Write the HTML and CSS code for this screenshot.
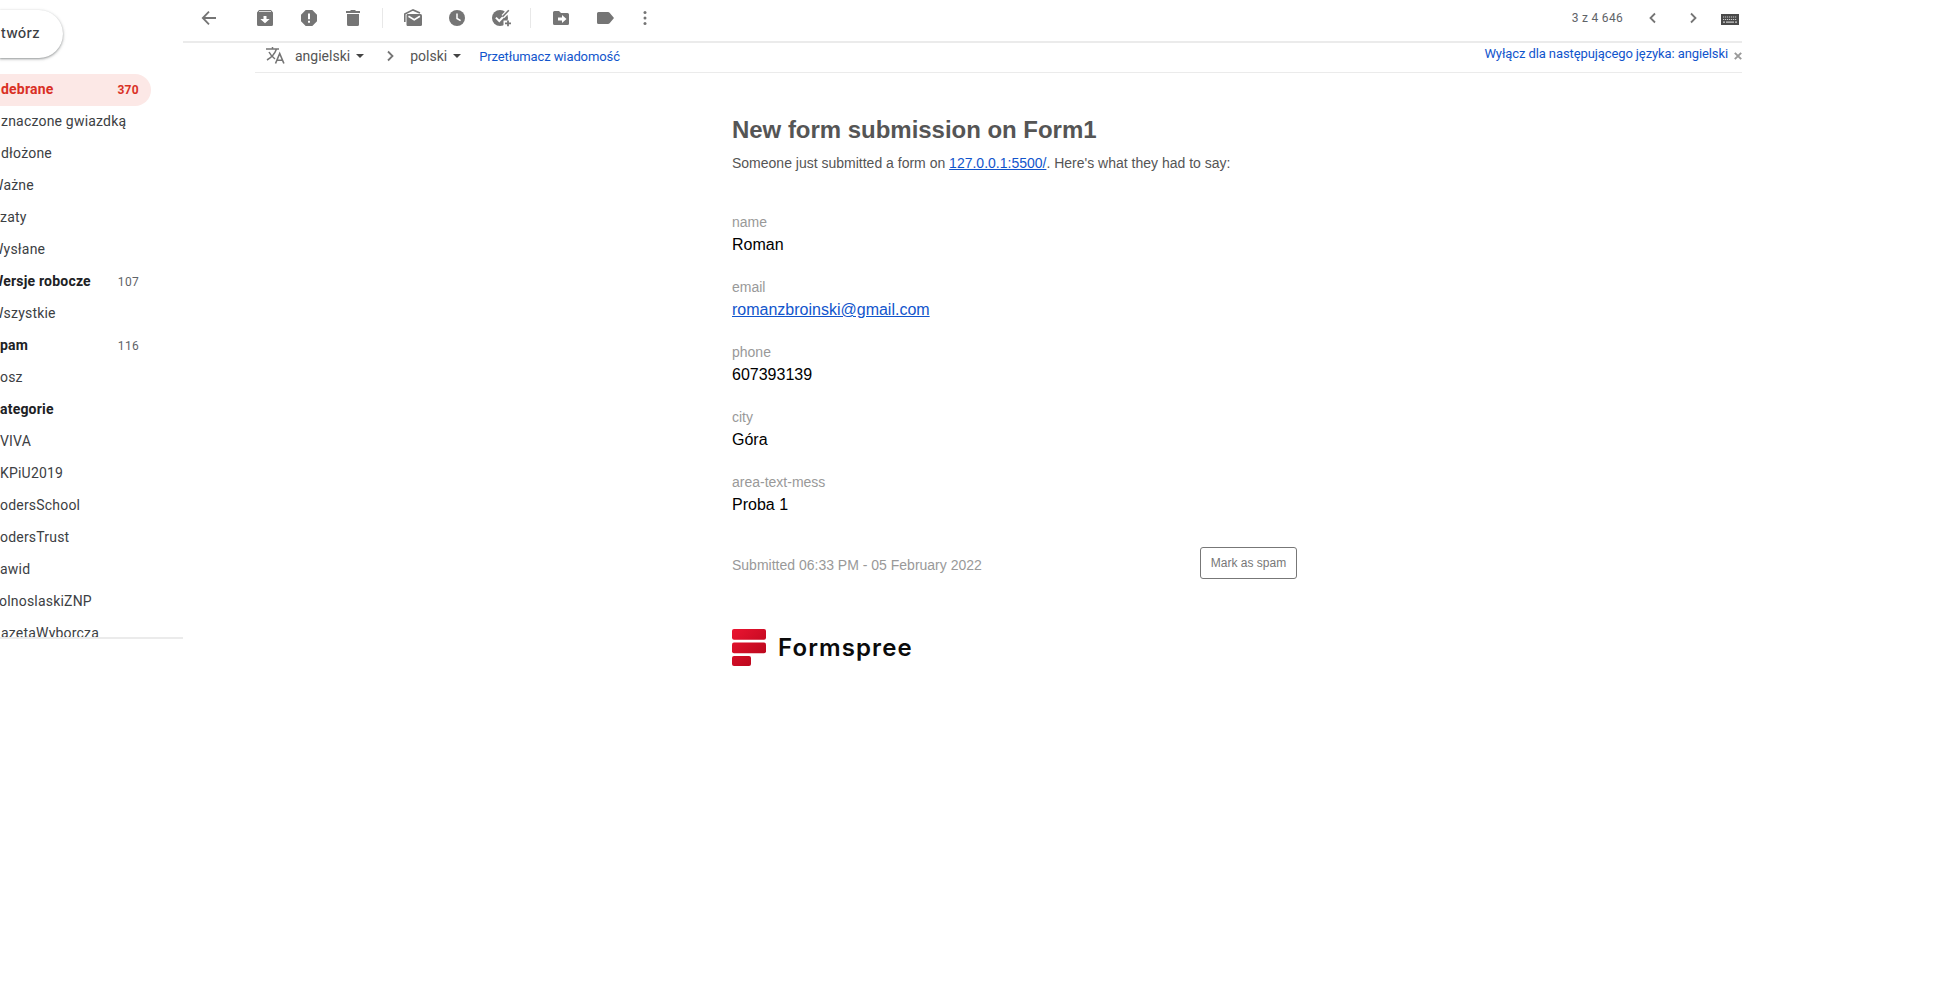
FILE: index.html
```html
<!DOCTYPE html>
<html lang="pl">
<head>
<meta charset="utf-8">
<title>Formspree</title>
<link rel="stylesheet" href="styles.css">
</head>
<body>
<div class="app">
  <aside class="sidebar">
    <div class="compose">twórz</div>
    <nav class="folders">
      <div class="folder active"><span>debrane</span><span class="count">370</span></div>
      <div class="folder"><span>znaczone gwiazdką</span></div>
      <div class="folder"><span>dłożone</span></div>
      <div class="folder cut"><span>Ważne</span></div>
      <div class="folder flush"><span>zaty</span></div>
      <div class="folder cut"><span>Wysłane</span></div>
      <div class="folder cut unread"><span>Wersje robocze</span><span class="count">107</span></div>
      <div class="folder cut"><span>Wszystkie</span></div>
      <div class="folder unread flush"><span>pam</span><span class="count">116</span></div>
      <div class="folder flush"><span>osz</span></div>
      <div class="folder unread flush"><span>ategorie</span></div>
      <div class="folder flush"><span>VIVA</span></div>
      <div class="folder flush"><span>KPiU2019</span></div>
      <div class="folder flush"><span>odersSchool</span></div>
      <div class="folder flush"><span>odersTrust</span></div>
      <div class="folder flush"><span>awid</span></div>
      <div class="folder tight"><span>olnoslaskiZNP</span></div>
      <div class="folder"><span>azetaWyborcza</span></div>
    </nav>
  </aside>

  <main class="main">
    <header class="toolbar">
      <svg class="icon back" viewBox="0 0 20 20"><path d="M17 10H4M10 3.700L3.800 10l6.200 6.300" fill="none" stroke="currentColor" stroke-width="1.800"/></svg>
      <div class="group">
        <svg class="icon" viewBox="0 0 20 20"><path fill-rule="evenodd" d="M4 2h12l2 2.500V16.500Q18 18 16.500 18h-13Q2 18 2 16.500V4.500zM4 4h12v-.7H4zM8.500 8v3H5.300L10 15.200 14.700 11H11.500V8z"/></svg>
        <svg class="icon" viewBox="0 0 20 20"><path fill-rule="evenodd" d="M6.700 2h6.600L18 6.700v6.600L13.300 18H6.700L2 13.300V6.700zM9 5.500v5.800h2V5.500zM9 12.800v2h2v-2z"/></svg>
        <svg class="icon" viewBox="0 0 20 20"><path d="M3 3h4l1-1h4l1 1h4v2H3zM4 6h12v10.500q0 1.500-1.500 1.500h-9Q4 18 4 16.500z"/></svg>
      </div>
      <div class="group">
        <svg class="icon" viewBox="0 0 20 20"><path d="M1.800 14V6L10 1.900 17 5" fill="none" stroke="currentColor" stroke-width="1.600"/><path d="M4.500 6h13Q19 6 19 7.500v9q0 1.500-1.500 1.500h-13Q3.500 18 3.500 16.500v-9Q3.500 6 4.500 6z"/><path d="M5.500 8.300l5.700 3.400 5.700-3.400" fill="none" stroke="#fff" stroke-width="1.600"/></svg>
        <svg class="icon" viewBox="0 0 20 20"><circle cx="10" cy="10" r="8"/><path d="M10 5.500v5l3.600 2.200" fill="none" stroke="#fff" stroke-width="1.500"/></svg>
        <svg class="icon" viewBox="0 0 20 20"><circle cx="9" cy="10" r="8"/><path d="M12 8.500l5.500-5.800" fill="none" stroke="#fff" stroke-width="4"/><path d="M4.900 9.600l3.400 3.400 5-5.200" fill="none" stroke="#fff" stroke-width="2"/><path d="M17.800 2.300L11.500 8.800" fill="none" stroke="currentColor" stroke-width="1.600"/><path d="M12.500 12.500h8v7h-8z" fill="#fff"/><path d="M17 12.500v5.800M14 15.400h6" fill="none" stroke="currentColor" stroke-width="1.800"/></svg>
      </div>
      <div class="group">
        <svg class="icon" viewBox="0 0 20 20"><path fill-rule="evenodd" d="M3.500 3H8l2 2h6.500Q18 5 18 6.500v9q0 1.500-1.500 1.500h-13Q2 17 2 15.500v-11Q2 3 3.500 3zM11 7v2.500H7v3h4V15l4.500-4z"/></svg>
        <svg class="icon" viewBox="0 0 20 20"><path d="M3.500 4H13q1 0 1.600.8L19 10l-4.400 5.200Q14 16 13 16H3.500Q2 16 2 14.500v-9Q2 4 3.500 4z"/></svg>
      </div>
      <svg class="icon more" viewBox="0 0 20 20"><circle cx="10" cy="4.500" r="1.500"/><circle cx="10" cy="10" r="1.500"/><circle cx="10" cy="15.500" r="1.500"/></svg>
      <div class="pager">
        <span class="position">3 z 4 646</span>
        <svg class="icon" viewBox="0 0 20 20"><path d="M12 5.500L7.500 10l4.500 4.500" fill="none" stroke="currentColor" stroke-width="1.800"/></svg>
        <svg class="icon next" viewBox="0 0 20 20"><path d="M8 5.500l4.500 4.500L8 14.500" fill="none" stroke="currentColor" stroke-width="1.800"/></svg>
        <svg class="keyboard" viewBox="0 0 18 11"><path d="M0 0h18v11H0z" fill="#4a4a4a"/><path d="M2 3h14M2 5.500h14" stroke="#ccc" stroke-width="1.200" stroke-dasharray="1.200 .8"/><path d="M2 8.200h2m1 0h8m1 0h2" stroke="#ccc" stroke-width="1.300"/></svg>
      </div>
    </header>

    <div class="translate">
      <svg class="lang-icon" viewBox="0 0 20 20"><path d="M1 3h13M7.500 1v2M11.500 3Q9 10 2 14M4 6q2 4 6 7" fill="none" stroke="currentColor" stroke-width="1.500"/><path d="M10.500 17.500L14.700 7.500l4.200 10M12 14.200h5.500" fill="none" stroke="currentColor" stroke-width="1.600"/></svg>
      <span class="lang from">angielski</span><i class="caret"></i>
      <svg class="icon arrow" viewBox="0 0 20 20"><path d="M8 5.500l4.500 4.500L8 14.500" fill="none" stroke="currentColor" stroke-width="1.800"/></svg>
      <span class="lang to">polski</span><i class="caret"></i>
      <a class="do-translate">Przetłumacz wiadomość</a>
      <a class="disable">Wyłącz dla następującego języka: angielski</a>
      <svg class="close" viewBox="0 0 8 8"><path d="M.8.8l6.400 6.400M7.200.8L.8 7.200" stroke="#999" stroke-width="1.900"/></svg>
    </div>

    <article class="mail">
      <h1>New form submission on Form1</h1>
      <p class="intro">Someone just submitted a form on <a>127.0.0.1:5500/</a>. Here's what they had to say:</p>
      <dl class="fields">
        <div class="field"><dt>name</dt><dd>Roman</dd></div>
        <div class="field"><dt>email</dt><dd><a>romanzbroinski@gmail.com</a></dd></div>
        <div class="field"><dt>phone</dt><dd>607393139</dd></div>
        <div class="field"><dt>city</dt><dd>Góra</dd></div>
        <div class="field"><dt>area-text-mess</dt><dd>Proba 1</dd></div>
      </dl>
      <div class="submitted"><span>Submitted 06:33 PM - 05 February 2022</span><button class="spam">Mark as spam</button></div>
      <div class="brand">
        <svg class="logo" viewBox="0 0 34 37"><defs><linearGradient id="red" gradientUnits="userSpaceOnUse" x1="0" y1="0" x2="30" y2="32"><stop offset="0" stop-color="#eb1431"/><stop offset="1" stop-color="#b8071c"/></linearGradient></defs><g fill="url(#red)"><rect width="34" height="10.700" rx="2"/><rect y="13.500" width="34" height="10.700" rx="2"/><rect y="27" width="19" height="10" rx="2"/></g></svg>
        <span class="wordmark">Formspree</span>
      </div>
    </article>
  </main>
</div>
</body>
</html>
```
FILE: styles.css
```css
* { box-sizing: border-box; }
body { margin: 0; background: #fff; font-family: Roboto, sans-serif; overflow: hidden; }
svg { display: block; flex: none; }
.app { display: flex; height: 988px; }

.sidebar { width: 183px; height: 639px; padding-top: 10px; overflow: hidden; border-bottom: 2px solid #ebebeb; flex: none; }
.compose { width: 63px; height: 48px; padding-left: 1px; border-radius: 0 24px 24px 0; box-shadow: 0 1px 2px rgba(60,64,67,.4), 0 1px 3px 1px rgba(60,64,67,.15); font: 500 14px/46px Inter, sans-serif; letter-spacing: .2px; color: #3c4043; }
.folders { margin-top: 16px; }
.folder { display: flex; justify-content: space-between; width: 151px; height: 32px; padding: 0 12px 0 1px; line-height: 31px; font-size: 14px; letter-spacing: .2px; color: #3c4043; white-space: nowrap; }
.folder.flush { padding-left: 0; }
.folder.tight { padding-left: 0; text-indent: -1px; }
.folder.cut span:first-child { margin-left: -10px; }
.folder.unread { font-weight: 700; color: #202124; }
.folder.active { font-weight: 700; color: #d93025; background: #fce8e6; border-radius: 0 16px 16px 0; }
.count { font-size: 12px; line-height: 32px; letter-spacing: .3px; }
.unread .count { font-weight: 400; color: #5f6368; }

.main { width: 1559px; color: #757575; }
.icon { width: 20px; height: 20px; fill: currentColor; overflow: visible; }
.toolbar { display: flex; align-items: center; height: 43px; padding: 0 3px 5px 16px; border-bottom: 2px solid #ebebeb; }
.back { margin-right: 36px; }
.group { display: flex; gap: 24px; height: 20px; }
.group + .group { margin-left: 19px; padding-left: 20px; border-left: 1px solid #e8e8e8; }
.more { margin-left: 20px; }
.pager { display: flex; align-items: center; margin-left: auto; }
.position { margin-right: 20px; font-size: 12px; letter-spacing: .3px; color: #5f6368; }
.next { margin: 0 18px 0 20px; }
.keyboard { width: 18px; height: 11px; margin-top: 3px; }

.translate { display: flex; align-items: center; width: 1487px; height: 30px; margin-left: 72px; padding: 0 0 3px 10px; border-bottom: 1px solid #ebebeb; font-size: 13px; letter-spacing: -.1px; }
.lang-icon { width: 20px; height: 20px; }
.lang { font-size: 14px; letter-spacing: 0; color: #555; }
.from { margin-left: 10px; }
.caret { margin-left: 6px; border: 4px solid transparent; border-top-color: #444; border-bottom: 0; }
.arrow { margin: 0 10px 0 16px; }
.do-translate { margin-left: 18px; color: #15c; }
.disable { margin: -5px 6px 0 auto; color: #15c; }
.close { width: 8px; height: 8px; }

.mail { width: 565px; margin: 42px 0 0 549px; font-family: "Liberation Sans", Arial, sans-serif; color: #555; }
.mail a { color: #15c; text-decoration: underline; }
h1 { margin: 0; font-size: 24px; line-height: 30px; letter-spacing: -.03px; }
.intro { margin: 8px 0 0; font-size: 14px; line-height: 20px; }
.fields { margin: 39px 0 0; }
.field { height: 65px; }
dt { font-size: 14px; line-height: 20px; color: #999; }
dd { margin: 1px 0 0; font-size: 16px; line-height: 24px; color: #000; }
.submitted { display: flex; justify-content: space-between; height: 32px; margin-top: 10px; font-size: 14px; line-height: 37px; color: #999; }
.spam { width: 97px; height: 32px; padding: 0; border: 1px solid #777; border-radius: 3px; background: #fff; font: 12px/28px "Liberation Sans", Arial, sans-serif; color: #777; }
.brand { display: flex; align-items: center; gap: 12px; margin-top: 50px; }
.logo { width: 34px; height: 37px; }
.wordmark { font: 600 24px/37px Inter, sans-serif; letter-spacing: 1.1px; color: #0b0b0b; }
```
